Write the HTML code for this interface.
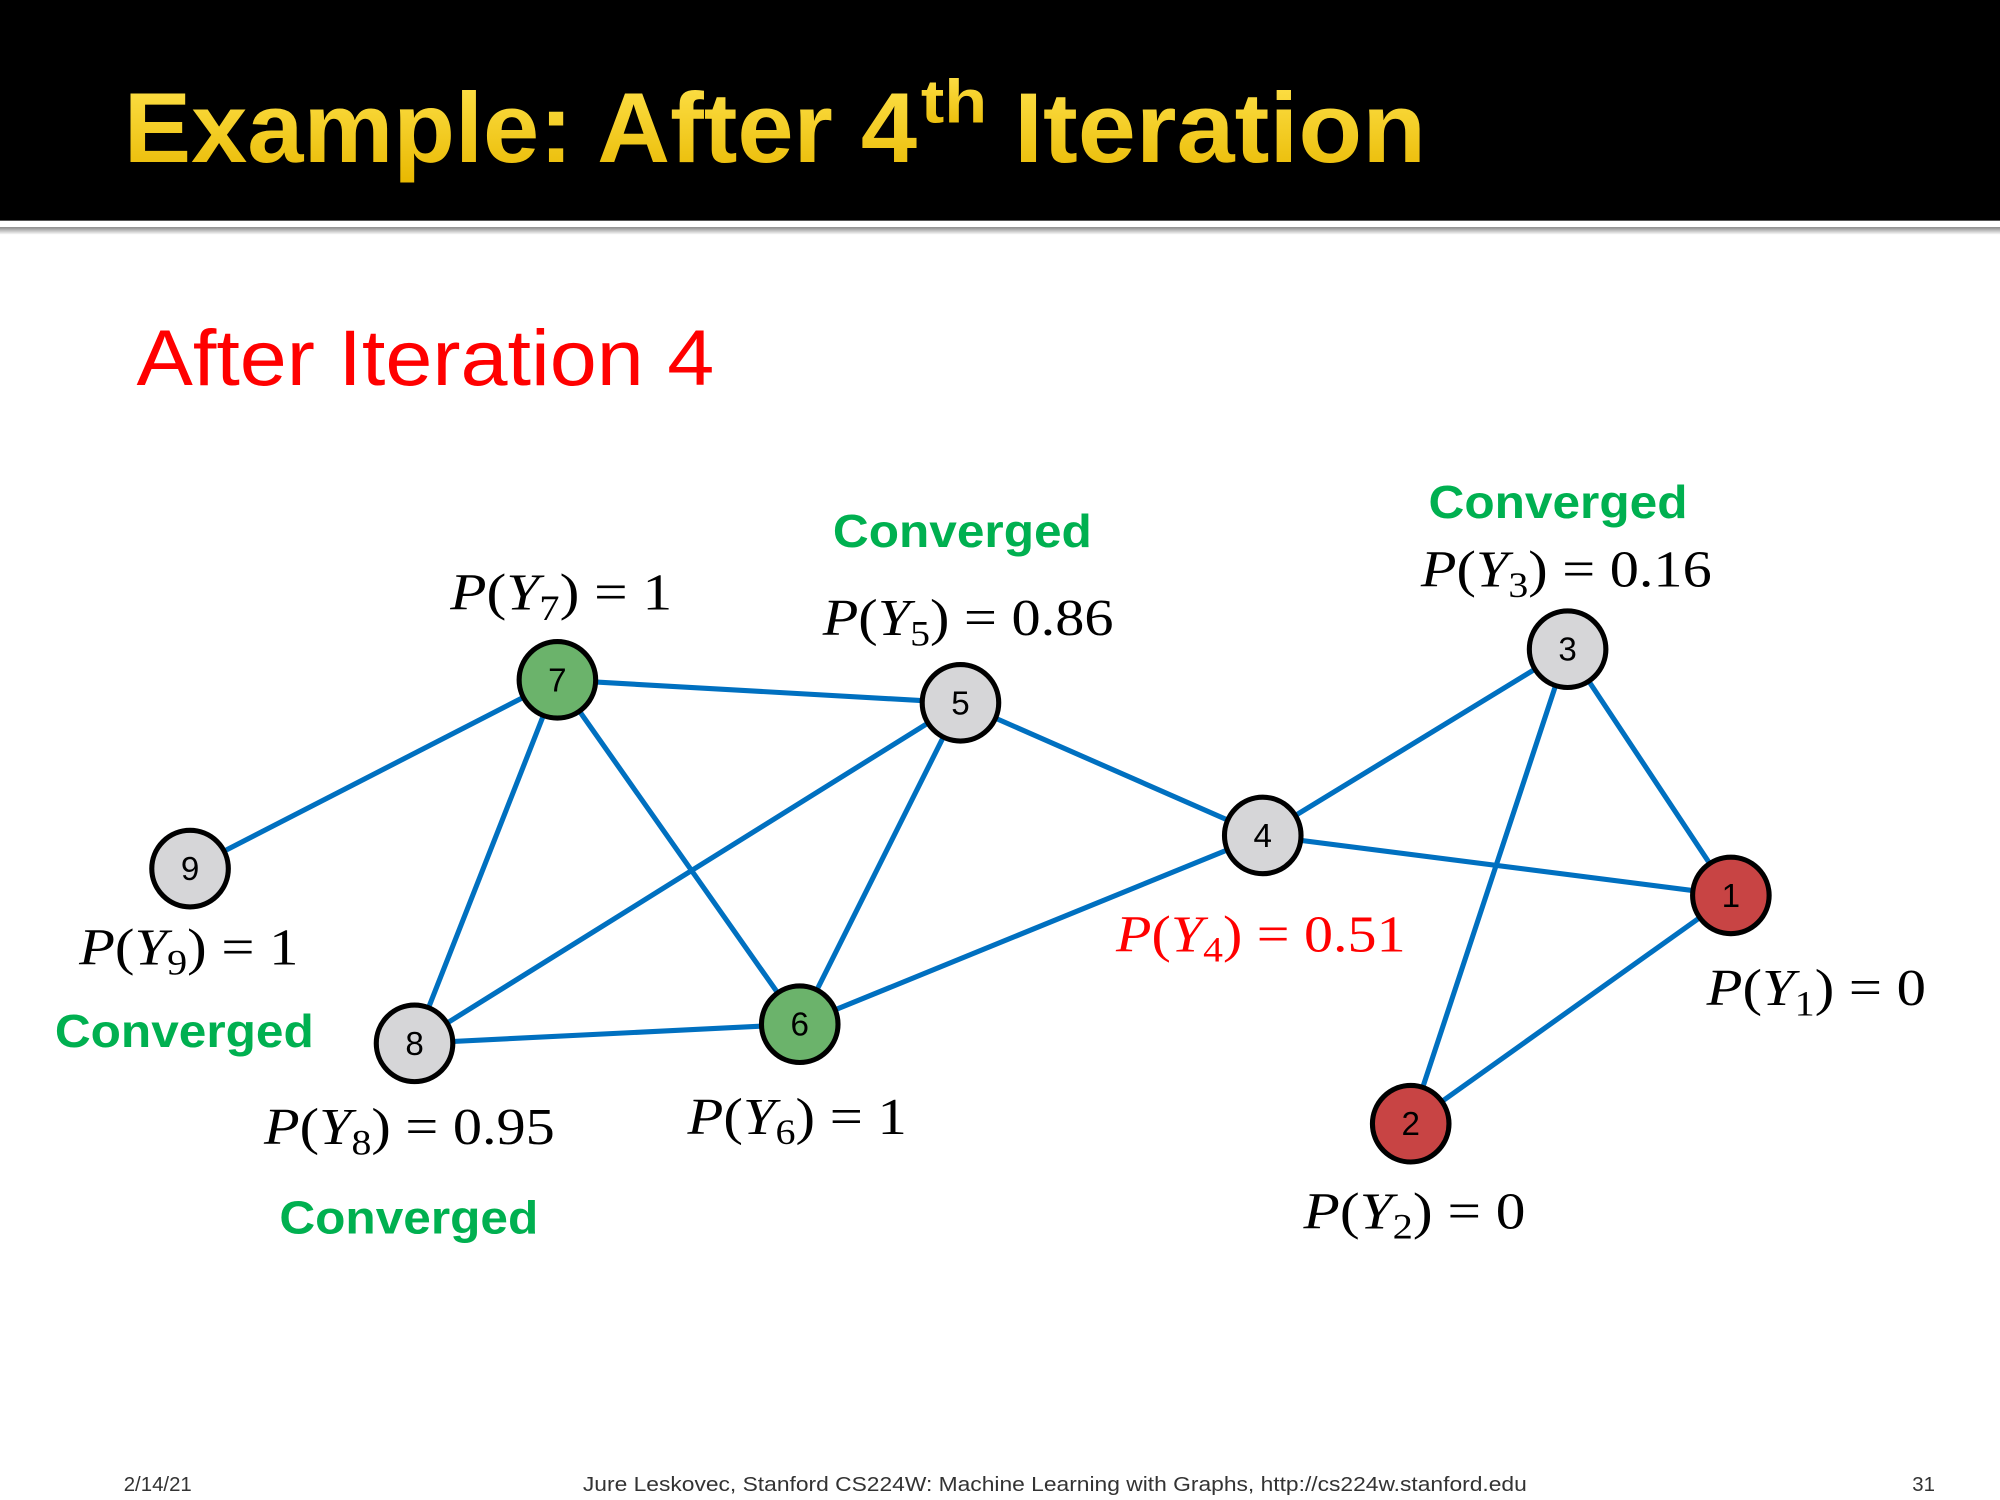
<!DOCTYPE html>
<html><head><meta charset="utf-8"><style>
html,body{margin:0;padding:0;background:#fff;overflow:hidden;width:2000px;height:1500px}
#w{width:1568px;height:1176px;transform:scale(1.27551);transform-origin:0 0;position:relative}
svg{display:block}
.m{font-family:"Liberation Serif",serif;font-size:41px}
.i{font-style:italic}
.c{font-family:"Liberation Sans",sans-serif;font-weight:bold;font-size:36px;fill:#00B050}
.n{font-family:"Liberation Sans",sans-serif;font-size:26px;text-anchor:middle}
</style></head><body><div id="w">
<svg width="1568" height="1176" viewBox="0 0 1568 1176">
<defs><linearGradient id="g" x1="0" y1="0" x2="0" y2="1"><stop offset="0" stop-color="#FFE34D"/><stop offset="1" stop-color="#E8B800"/></linearGradient>
<linearGradient id="sh" x1="0" y1="0" x2="0" y2="1"><stop offset="0" stop-color="#888"/><stop offset="1" stop-color="#fff"/></linearGradient></defs>
<rect x="0" y="0" width="1568" height="173" fill="#000"/>
<rect x="0" y="178" width="1568" height="6" fill="url(#sh)"/>
<text x="97" y="127" font-family="Liberation Sans,sans-serif" font-weight="bold" font-size="78" fill="url(#g)" textLength="622" lengthAdjust="spacingAndGlyphs">Example: After 4</text>
<text x="722" y="96" font-family="Liberation Sans,sans-serif" font-weight="bold" font-size="48" fill="url(#g)" textLength="52" lengthAdjust="spacingAndGlyphs">th</text>
<text x="795" y="127" font-family="Liberation Sans,sans-serif" font-weight="bold" font-size="78" fill="url(#g)" textLength="323" lengthAdjust="spacingAndGlyphs">Iteration</text>
<text x="107" y="302" font-family="Liberation Sans,sans-serif" font-size="62" fill="#FF0000" textLength="453" lengthAdjust="spacingAndGlyphs">After Iteration 4</text>
<g stroke="#0070C0" stroke-width="4">
<line x1="437" y1="533" x2="149" y2="681"/><line x1="437" y1="533" x2="753" y2="551"/>
<line x1="437" y1="533" x2="325" y2="818"/><line x1="437" y1="533" x2="627" y2="803"/>
<line x1="753" y1="551" x2="325" y2="818"/><line x1="753" y1="551" x2="627" y2="803"/>
<line x1="753" y1="551" x2="990" y2="655"/><line x1="325" y1="818" x2="627" y2="803"/>
<line x1="627" y1="803" x2="990" y2="655"/><line x1="990" y1="655" x2="1229" y2="509"/>
<line x1="990" y1="655" x2="1357" y2="702"/><line x1="1229" y1="509" x2="1357" y2="702"/>
<line x1="1229" y1="509" x2="1106" y2="881"/><line x1="1357" y1="702" x2="1106" y2="881"/>
</g>
<g stroke="#000" stroke-width="4">
<circle cx="437" cy="533" r="30" fill="#6BB36B"/><circle cx="753" cy="551" r="30" fill="#D6D6D8"/>
<circle cx="149" cy="681" r="30" fill="#D6D6D8"/><circle cx="325" cy="818" r="30" fill="#D6D6D8"/>
<circle cx="627" cy="803" r="30" fill="#6BB36B"/><circle cx="990" cy="655" r="30" fill="#D6D6D8"/>
<circle cx="1229" cy="509" r="30" fill="#D6D6D8"/><circle cx="1357" cy="702" r="30" fill="#C84444"/>
<circle cx="1106" cy="881" r="30" fill="#C84444"/>
</g>
<g class="n">
<text x="437" y="542">7</text><text x="753" y="560">5</text><text x="149" y="690">9</text>
<text x="325" y="827">8</text><text x="627" y="812">6</text><text x="990" y="664">4</text>
<text x="1229" y="518">3</text><text x="1357" y="711">1</text><text x="1106" y="890">2</text>
</g>
<g class="m">
<text x="353" y="478" textLength="174" lengthAdjust="spacingAndGlyphs"><tspan class="i">P</tspan>(<tspan class="i">Y</tspan><tspan font-size="28" dy="8">7</tspan><tspan dy="-8">) = 1</tspan></text>
<text x="645" y="498" textLength="228" lengthAdjust="spacingAndGlyphs"><tspan class="i">P</tspan>(<tspan class="i">Y</tspan><tspan font-size="28" dy="8">5</tspan><tspan dy="-8">) = 0.86</tspan></text>
<text x="1114" y="460" textLength="228" lengthAdjust="spacingAndGlyphs"><tspan class="i">P</tspan>(<tspan class="i">Y</tspan><tspan font-size="28" dy="8">3</tspan><tspan dy="-8">) = 0.16</tspan></text>
<text x="62" y="756" textLength="172" lengthAdjust="spacingAndGlyphs"><tspan class="i">P</tspan>(<tspan class="i">Y</tspan><tspan font-size="28" dy="8">9</tspan><tspan dy="-8">) = 1</tspan></text>
<text x="875" y="746" fill="#FF0000" textLength="227" lengthAdjust="spacingAndGlyphs"><tspan class="i">P</tspan>(<tspan class="i">Y</tspan><tspan font-size="28" dy="8">4</tspan><tspan dy="-8">) = 0.51</tspan></text>
<text x="1338" y="788" textLength="172" lengthAdjust="spacingAndGlyphs"><tspan class="i">P</tspan>(<tspan class="i">Y</tspan><tspan font-size="28" dy="8">1</tspan><tspan dy="-8">) = 0</tspan></text>
<text x="207" y="897" textLength="228" lengthAdjust="spacingAndGlyphs"><tspan class="i">P</tspan>(<tspan class="i">Y</tspan><tspan font-size="28" dy="8">8</tspan><tspan dy="-8">) = 0.95</tspan></text>
<text x="539" y="889" textLength="172" lengthAdjust="spacingAndGlyphs"><tspan class="i">P</tspan>(<tspan class="i">Y</tspan><tspan font-size="28" dy="8">6</tspan><tspan dy="-8">) = 1</tspan></text>
<text x="1022" y="963" textLength="174" lengthAdjust="spacingAndGlyphs"><tspan class="i">P</tspan>(<tspan class="i">Y</tspan><tspan font-size="28" dy="8">2</tspan><tspan dy="-8">) = 0</tspan></text>
</g>
<g class="c">
<text x="653" y="429" textLength="203" lengthAdjust="spacingAndGlyphs">Converged</text>
<text x="1120" y="406" textLength="203" lengthAdjust="spacingAndGlyphs">Converged</text>
<text x="43" y="821" textLength="203" lengthAdjust="spacingAndGlyphs">Converged</text>
<text x="219" y="967" textLength="203" lengthAdjust="spacingAndGlyphs">Converged</text>
</g>
<g font-family="Liberation Sans,sans-serif" font-size="16" fill="#333">
<text x="97" y="1169">2/14/21</text>
<text x="827" y="1169" text-anchor="middle" textLength="740" lengthAdjust="spacingAndGlyphs">Jure Leskovec, Stanford CS224W: Machine Learning with Graphs, http://cs224w.stanford.edu</text>
<text x="1517" y="1169" text-anchor="end">31</text>
</g>
</svg></div></body></html>
